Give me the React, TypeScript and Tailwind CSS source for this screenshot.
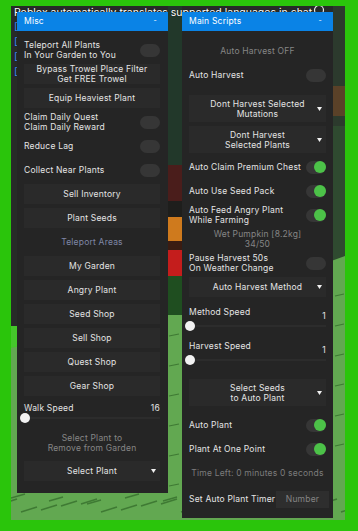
import type { ReactNode } from 'react';

const font = { fontFamily: 'Inter, "Noto Sans", sans-serif' };

function Panel({ title, children, className }: { title: string; children: ReactNode; className?: string }) {
  return (
    <div className={`relative w-[151px] bg-[#252525] ${className || ''}`}>
      <div className="flex h-[19px] items-center justify-between bg-[#0a83e6] pl-[7px] pr-[11px] text-[8.5px] tracking-[0.2px] text-white">
        <span>{title}</span>
        <span className="text-[7px]">-</span>
      </div>
      {children}
    </div>
  );
}

function Arrow() {
  return (
    <svg width="5" height="4" viewBox="0 0 5 4">
      <path d="M0 0 H5 L2.5 4 Z" fill="#f0f0f0" />
    </svg>
  );
}

function Toggle({ label, on, className }: { label: ReactNode; on?: boolean; className?: string }) {
  return (
    <div className={`flex h-[20px] items-center justify-between text-[8.5px] leading-[10px] tracking-[0.2px] text-[#e4e4e4] ${className || ''}`}>
      <span>{label}</span>
      <span className="flex h-[13px] w-[20px] items-center justify-end rounded-full bg-[#363636]">
        {on && <span className="h-[12px] w-[12px] rounded-full bg-[#4cc248]" />}
      </span>
    </div>
  );
}

function Btn({ label, className }: { label: ReactNode; className?: string }) {
  return (
    <div className={`flex h-[20px] items-center justify-center bg-[#2a2a2a] text-center text-[8.5px] leading-[10px] tracking-[0.2px] text-[#e4e4e4] ${className || ''}`}>
      {label}
    </div>
  );
}

function Dropdown({ label, tall, className }: { label: ReactNode; tall?: boolean; className?: string }) {
  return (
    <div className={`flex items-center bg-[#2a2a2a] text-[8.5px] leading-[10px] tracking-[0.2px] text-[#e4e4e4] ${tall ? 'h-[27px]' : 'h-[20px]'} ${className || ''}`}>
      <span className="w-[14px]" />
      <span className="flex-1 text-center">{label}</span>
      <span className="flex w-[14px] justify-center">
        <Arrow />
      </span>
    </div>
  );
}

function Note({ label, color, className }: { label: ReactNode; color: string; className?: string }) {
  return (
    <div className={`flex h-[20px] items-center justify-center text-center text-[8.5px] leading-[10px] tracking-[0.2px] ${color} ${className || ''}`}>
      {label}
    </div>
  );
}

function Slider({ label, value, tight, className }: { label: string; value: string; tight?: boolean; className?: string }) {
  return (
    <div className={`flex flex-col text-[8.5px] leading-[10px] tracking-[0.2px] text-[#e4e4e4] ${className || ''}`}>
      <div className="flex justify-between">
        <span>{label}</span>
        <span className={tight ? '' : 'translate-y-[4px]'}>{value}</span>
      </div>
      <div className={`flex h-[10px] items-center ${tight ? '' : 'mt-[4px]'}`}>
        <span className="-ml-[4px] h-[10px] w-[10px] rounded-full bg-[#f2f2f2]" />
        <span className="h-[2px] flex-1 bg-[#2c2c2c]" />
      </div>
    </div>
  );
}

function Scene() {
  return (
    <div className="absolute inset-0">
      <svg width="334" height="514" viewBox="0 0 334 514" className="absolute inset-0">
        <rect width="334" height="514" fill="#272b28" />
        <rect x="322" y="0" width="12" height="120" fill="#2c3a2d" />
        <rect x="322" y="80" width="12" height="30" fill="#5a4128" />
        <rect x="322" y="120" width="12" height="140" fill="#2f4a30" />
        <rect x="157" y="0" width="14" height="160" fill="#22382a" />
        <rect x="157" y="159" width="14" height="36" fill="#4a1d1b" />
        <rect x="157" y="195" width="14" height="16" fill="#1e1e1c" />
        <rect x="157" y="211" width="14" height="24" fill="#cf7a1d" />
        <rect x="157" y="235" width="14" height="9" fill="#3a1c12" />
        <rect x="157" y="244" width="14" height="26" fill="#c41d1c" />
        <rect x="157" y="270" width="14" height="40" fill="#1f4e20" />
        <rect x="0" y="320" width="6" height="22" fill="#45c72b" />
        <polygon points="0,342 157,309 171,309 334,250 334,514 0,514" fill="#62a851" />
        {[0, 1, 2, 3, 4, 5, 6, 7, 8].map((i) => (
          <g key={i} fill="none" stroke="#3f7a34" strokeWidth="1.5">
            <path d={`M${i * 40 - 10} ${498 + (i % 2) * 6} l16 -5`} />
            <path d={`M${i * 40 + 10} ${506 - (i % 2) * 6} l16 -5`} />
            <path d={`M${i * 38} ${492 + (i % 3) * 3} l14 -4`} />
          </g>
        ))}
        {[330, 360, 390, 420, 450, 480].map((y) => (
          <path key={y} d={`M158 ${y} l10 -2 M324 ${y - 40} l9 -2`} stroke="#3f7a34" strokeWidth="1.2" />
        ))}
        <circle cx="308" cy="4" r="4.5" fill="none" stroke="#e8e8e8" strokeWidth="1.2" />
      </svg>
      <div className="relative pl-[3px] pt-[1px] text-[10.5px] leading-[11px] text-white [text-shadow:0_0_1px_#000]" style={font}>
        <div className="whitespace-nowrap">Roblox automatically translates supported languages in chat</div>
        <div className="mt-[3px] flex flex-col gap-[5px] text-[10px] leading-[10px] text-[#4a8dff]">
          <span>[</span>
          <span>[</span>
          <span>[</span>
          <span>[</span>
        </div>
      </div>
    </div>
  );
}

export default function App() {
  return (
    <div className="h-[531px] w-[358px] bg-[#2ac50b] pl-[11px] pt-[6px]" style={font}>
      <div className="relative h-[514px] w-[334px] overflow-hidden">
        <Scene />
        <div className="relative flex items-start gap-[14px] pl-[6px] pt-[6px]">
          <Panel title="Misc">
            <div className="flex flex-col gap-[4px] pb-[12px] pl-[7px] pr-[8px] pt-[9px]">
              <Toggle label={<>Teleport All Plants<br />In Your Garden to You</>} />
              <Btn label={<>Bypass Trowel Place Filter<br />Get FREE Trowel</>} />
              <Btn label="Equip Heaviest Plant" />
              <Toggle label={<>Claim Daily Quest<br />Claim Daily Reward</>} />
              <Toggle label="Reduce Lag" />
              <Toggle label="Collect Near Plants" />
              <Btn label="Sell Inventory" />
              <Btn label="Plant Seeds" />
              <Note label="Teleport Areas" color="text-[#7f87a6]" />
              <Btn label="My Garden" />
              <Btn label="Angry Plant" />
              <Btn label="Seed Shop" />
              <Btn label="Sell Shop" />
              <Btn label="Quest Shop" />
              <Btn label="Gear Shop" />
              <Slider label="Walk Speed" value="16" tight className="mt-[3px]" />
              <Note label={<>Select Plant to<br />Remove from Garden</>} color="text-[#858585]" className="mt-[6px]" />
              <Dropdown label="Select Plant" className="mt-[4px]" />
            </div>
          </Panel>
          <Panel title="Main Scripts">
            <div className="flex flex-col gap-[4px] pb-[9px] pl-[7px] pr-[7px] pt-[10px]">
              <Note label="Auto Harvest OFF" color="text-[#858585]" />
              <Toggle label="Auto Harvest" />
              <Dropdown tall label={<>Dont Harvest Selected<br />Mutations</>} className="mt-[6px]" />
              <Dropdown tall label={<>Dont Harvest<br />Selected Plants</>} />
              <Toggle on label="Auto Claim Premium Chest" />
              <Toggle on label="Auto Use Seed Pack" />
              <Toggle on label={<>Auto Feed Angry Plant<br />While Farming</>} />
              <Note label={<>Wet Pumpkin [8.2kg]<br />34/50</>} color="text-[#858585]" />
              <Toggle label={<>Pause Harvest 50s<br />On Weather Change</>} />
              <Dropdown label="Auto Harvest Method" />
              <Slider label="Method Speed" value="1" className="pt-[6px]" />
              <Slider label="Harvest Speed" value="1" className="pt-[6px]" />
              <Dropdown tall label={<>Select Seeds<br />to Auto Plant</>} className="mt-[10px]" />
              <Toggle on label="Auto Plant" className="mt-[5px]" />
              <Toggle on label="Plant At One Point" />
              <Note label="Time Left: 0 minutes 0 seconds" color="text-[#7c7c7c]" className="h-[14px]" />
              <div className="mt-[2px] flex h-[20px] items-center justify-between text-[8.5px] tracking-[0.2px] text-[#e4e4e4]">
                <span>Set Auto Plant Timer</span>
                <span className="-mr-[3px] flex h-[17px] w-[53px] items-center justify-center bg-[#2e2e2e] text-[#858585]">Number</span>
              </div>
            </div>
          </Panel>
        </div>
      </div>
    </div>
  );
}
